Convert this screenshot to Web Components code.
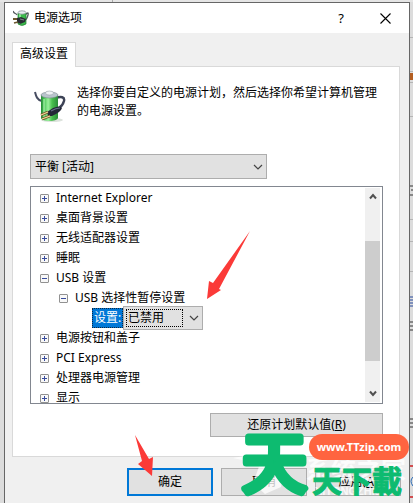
<!DOCTYPE html>
<html lang="zh-CN">
<head>
<meta charset="utf-8">
<title>电源选项</title>
<style>
html,body{margin:0;height:100%}
body{font:12px/20px "Noto Sans","Noto Sans CJK SC",sans-serif;color:#000;background:#dcdcdc;overflow:hidden}
</style>
</head>
<body>
<desktop-scene></desktop-scene>
<script>
const define = (name, html, setup) => customElements.define(name, class extends HTMLElement {
  connectedCallback() {
    if (this.shadowRoot) return;
    const t = document.createElement('template');
    t.innerHTML = html;
    this.attachShadow({mode: 'open'}).append(t.content.cloneNode(true));
    if (setup) setup(this, this.shadowRoot);
  }
});

define('battery-icon', `<style>:host{display:block;width:32px;height:32px;flex:none}svg{display:block;width:100%;height:100%}</style>
<svg viewBox="0 0 32 32"><defs><linearGradient id="g"><stop stop-color="#238a35"/><stop offset=".2" stop-color="#50c95c"/><stop offset=".42" stop-color="#9af09c"/><stop offset=".65" stop-color="#49c04e"/><stop offset="1" stop-color="#2a8c38"/></linearGradient></defs>
<ellipse cx="18" cy="30" rx="11" ry="2" fill="#dde3dd"/>
<path d="M1 2C2 6 3 10 8 11" fill="none" stroke="#474d61" stroke-width="2"/>
<path d="M22 8C27 6 31 7 30 11S28 16 25 18" fill="none" stroke="#3d4356" stroke-width="2.4"/>
<path d="M7 5V28C8 32 23 32 24 28V5Z" fill="url(#g)"/>
<ellipse cx="15.500" cy="5" rx="8.500" ry="3" fill="#b9c4cc" stroke="#77858c" stroke-width=".6"/>
<ellipse cx="15.500" cy="3" rx="4" ry="2" fill="#eef1f4" stroke="#8b959d" stroke-width=".5"/>
<path d="M10 9V27" stroke="#caffca" stroke-width="1.500" opacity=".6"/>
<path d="M13 22L19 18Q26 15 28 18Q27 22 18 26L14 26Z" fill="#242838"/>
<path d="M17 21Q22 18 26 18" fill="none" stroke="#68708a" stroke-width="1.200"/>
<path d="M14 22L7 25M16 26L8 29" stroke="#715328" stroke-width="2.600"/><path d="M14 22L7 25M16 26L8 29" stroke="#f3da98" stroke-width="1.300"/></svg>`);

define('title-icon', `<style>:host{display:block;width:16px;height:16px;flex:none}svg{display:block}</style>
<svg width="16" height="16" viewBox="0 0 16 16"><path d="M0 1C1 4 3 3 4 5M12 5Q16 1 15 5T12 10" fill="none" stroke="#555c60" stroke-width="1.300"/>
<path d="M5 3H13V14Q9 17 5 14Z" fill="#3bbb4b" stroke="#237c34" stroke-width=".7"/><path d="M7 4V14" stroke="#a5f5aa" stroke-width="1.500"/>
<ellipse cx="9" cy="2.500" rx="4" ry="1.700" fill="#e8edf0" stroke="#80898f" stroke-width=".7"/>
<path d="M4 8L8 7L13 9L12 12L7 14L4 12Z" fill="#292d35"/><path d="M0 9L4 9M1 13L5 12" stroke="#6c5830" stroke-width="1.800"/><path d="M7 9L11 10" stroke="#81858d"/></svg>`);

define('title-bar', `<style>
:host{display:flex;align-items:center;height:30px;background:#fff;padding:0 18px 0 8px;line-height:18px}
h1{font:inherit;margin:0 auto 0 5px}
button{all:unset;width:14px;height:18px;text-align:center;font-size:13px}
.x{width:11px;height:11px;margin-left:32px}svg{display:block}
</style><title-icon></title-icon><h1><slot></slot></h1><button aria-label="帮助">?</button>
<button class="x" aria-label="关闭"><svg width="11" height="11"><path d="M.5.5L10.500 10.500M10.500.5L.5 10.500" stroke="#000" stroke-width="1.100"/></svg></button>`);

define('tab-panel', `<style>
:host{display:block;padding:9px 9px 0 7px}
button{display:block;position:relative;font:inherit;line-height:22px;height:25px;padding:0 7px 2px;border:1px solid #d9d9d9;border-bottom:0;background:#fff;margin:0 0 -1px;color:inherit}
section{border:1px solid #d9d9d9;background:#fff;padding:17px 16px 19px 17px}
</style><button role="tab" aria-selected="true"><slot name="tab"></slot></button><section><slot></slot></section>`);

define('plan-note', `<style>
:host{display:flex;gap:11px;padding:0 0 0 4px;margin-bottom:32px}
battery-icon{margin-top:6px}p{margin:0;line-height:18px;white-space:nowrap}
</style><battery-icon></battery-icon><p><slot></slot></p>`);

define('drop-down', `<style>
:host{display:block;position:relative;height:25px;line-height:20px}
select{appearance:none;box-sizing:border-box;width:100%;height:100%;border:1px solid #adadad;border-radius:0;background:#e1e1e1;font:inherit;line-height:20px;padding:0 20px 0 4px;margin:0;color:inherit;display:block}
svg{position:absolute;right:4px;top:50%;margin-top:-3px;pointer-events:none}
i{display:none;position:absolute;inset:3px 20px 3px 3px;border:1px dotted #000;pointer-events:none}
:host([focused]) i{display:block}
</style><select></select><i></i><svg width="10" height="6"><path d="M1 1L5 5L9 1" fill="none" stroke="#444" stroke-width="1.200"/></svg>`,
(h, r) => { const s = r.querySelector('select'); s.setAttribute('aria-label', h.getAttribute('label')); s.add(new Option(h.getAttribute('value'))); });

define('tree-row', `<style>
:host{display:flex;align-items:center;height:20px;padding-left:9px}
:host([level="2"]){padding-left:28px}
button{all:unset;box-sizing:border-box;width:9px;height:9px;border:1px solid #919191;border-radius:1px;margin-right:7px;background:linear-gradient(#364a9b,#364a9b) center/5px 1px no-repeat,linear-gradient(#364a9b,#364a9b) center/1px 5px no-repeat,#f8f8f8;flex:none}
:host([open]) button{background:linear-gradient(#364a9b,#364a9b) center/5px 1px no-repeat,#f8f8f8}
</style><button></button><span><slot></slot></span>`, (h, r) => r.querySelector('button').setAttribute('aria-label', (h.hasAttribute('open') ? '折叠 ' : '展开 ') + h.textContent));

define('setting-row', `<style>
:host{display:flex;align-items:center;height:20px;padding-left:61px}
span{background:#0078d7;color:#fff;border:1px dotted #102840;height:18px;line-height:18px;padding-left:1px;width:28px;white-space:nowrap}
drop-down{width:80px;height:24px}
</style><span><slot></slot></span><drop-down focused label="设置" value="已禁用"></drop-down>`);

define('scroll-rail', `<style>
:host{display:flex;flex-direction:column;width:15px;background:#f0f0f0;align-items:center;margin:1px 2px 1px 0}
button{all:unset;height:17px;display:flex;align-items:center}
.track{flex:1;width:100%;display:flex;flex-direction:column}
.track:before{content:"";flex:36}.track i{background:#cdcdcd;flex:120}.track:after{content:"";flex:24}
</style><button aria-label="向上"><svg width="8" height="7"><path d="M1 5.500L4 2L7 5.500" fill="none" stroke="#505050" stroke-width="2"/></svg></button>
<div class="track"><i></i></div>
<button aria-label="向下"><svg width="8" height="7"><path d="M1 1.500L4 5L7 1.500" fill="none" stroke="#505050" stroke-width="2"/></svg></button>`);

define('settings-tree', `<style>
:host{display:flex;border:1px solid #828790;background:#fff;height:216px;margin-top:7px;overflow:hidden}
div{flex:1;overflow:hidden;padding-top:1px;min-width:0}
</style><div>
<tree-row>Internet Explorer</tree-row><tree-row>桌面背景设置</tree-row><tree-row>无线适配器设置</tree-row><tree-row>睡眠</tree-row>
<tree-row open>USB 设置</tree-row><tree-row open level="2">USB 选择性暂停设置</tree-row><setting-row>设置:</setting-row>
<tree-row>电源按钮和盖子</tree-row><tree-row>PCI Express</tree-row><tree-row>处理器电源管理</tree-row><tree-row>显示</tree-row>
</div><scroll-rail></scroll-rail>`);

define('push-button', `<style>
:host{display:block;width:86px;height:28px}
button{box-sizing:border-box;width:100%;height:100%;font:inherit;line-height:18px;padding:0;border:1px solid #adadad;background:#e1e1e1;color:inherit;display:block}
:host([primary]) button{border:2px solid #0078d7}
</style><button><slot></slot></button>`);

define('power-dialog', `<style>
:host{display:block;box-sizing:border-box;height:100%;border:1px solid #666;border-bottom:0;background:#f0f0f0;overflow:hidden}
.plan{width:67%}
.reset{width:173px;height:24px;margin:9px 0 0 auto}
footer{display:flex;justify-content:flex-end;gap:8px;padding:11px 8px 6px}
</style>
<title-bar>电源选项</title-bar>
<tab-panel><span slot="tab">高级设置</span>
<plan-note>选择你要自定义的电源计划，然后选择你希望计算机管理<br>的电源设置。</plan-note>
<drop-down class="plan" label="电源计划" value="平衡 [活动]"></drop-down>
<settings-tree></settings-tree>
<push-button class="reset">还原计划默认值(<u>R</u>)</push-button>
</tab-panel>
<footer><push-button primary>确定</push-button><push-button>取消</push-button><push-button>应用(<u>A</u>)</push-button></footer>`);

define('pointer-arrows', `<style>:host{position:absolute;left:0;top:0;pointer-events:none}svg{display:block}</style>
<svg width="413" height="503"><g fill="#fb3a38"><path d="M250 231L219 289L221 290L207 299L209 281L213 283Z"/><path d="M135 435L149 459L153 457L152 476L138 464L142 461Z"/></g></svg>`);

define('site-mark', `<style>
:host{position:absolute;right:0;bottom:0;width:175px;height:80px;pointer-events:none;font-family:"Noto Sans CJK SC",sans-serif;white-space:nowrap}
svg{display:block;overflow:visible}
.ghost{font-size:25px;fill:#fff;opacity:.8;font-weight:700}
.latin{font:700 11px "Liberation Sans",sans-serif;fill:#fff;opacity:.8}
.green{fill:#0dbb70;stroke:#0dbb70;stroke-linejoin:round;stroke-linecap:round}
.big{font-size:65px;stroke-width:7px}
.small{font-size:30px;font-weight:700;stroke-width:1px}
.pill{position:absolute;left:71px;top:11px;width:100px;height:26px;border-radius:13px;background:#ff6440;color:#fff;font:700 11px/26px "Noto Sans",sans-serif;text-align:center}
</style>
<svg width="175" height="80"><path d="M-5 35L18 31L31 20L61 21L47 33L69 37L46 44L43 64L27 71L15 60L22 41Z" fill="#fff" opacity=".75"/>
<text class="ghost" x="68" y="56">系统之家</text><text class="latin" x="77" y="72">XITONGZHIJIA</text>
<text class="green big" x="4" y="64">天</text><text class="green small" x="74" y="69">天下載</text></svg><span class="pill">www.TTzip.com</span>`);

define('backdrop-edge', `<style>:host{position:absolute;inset:0}svg{position:absolute;right:0;top:0}i{position:absolute;left:112px;top:0;width:1px;height:2px;background:#aaa}
:host:before{content:"";position:absolute;inset:0 0 auto 0;height:2px;background:#e5e5e5}</style><i></i>
<svg width="4" height="503"><path d="M0 37.500H4M0 71.500H4M0 82.500H4M0 116.500H4M0 219.500H4M0 241.500H4M0 271.500H4" stroke="#b5b5b5"/><path d="M1 73H4V80H1Z" fill="#b35e21"/><path d="M1 186H4M2 190H4M1 195H4M1 322H4M1 326H4M1 330H4M1 419H4M1 423H4M1 427H4" stroke="#333"/><path d="M1 297H4M1 300H4M1 303H4M1 306H4" stroke="#24479b"/><path d="M1 466H4M1 497H4" stroke="#d04e50" stroke-width="2"/><path d="M4 477Q0 481 4 486" fill="none" stroke="#2869b5"/></svg>`);

define('desktop-scene', `<style>
:host{display:block;position:relative;box-sizing:border-box;height:100vh;padding:2px 3px 0 4px;overflow:hidden}
power-dialog{position:relative}
</style><backdrop-edge></backdrop-edge><power-dialog></power-dialog><pointer-arrows></pointer-arrows><site-mark></site-mark>`);
</script>
</body>
</html>
